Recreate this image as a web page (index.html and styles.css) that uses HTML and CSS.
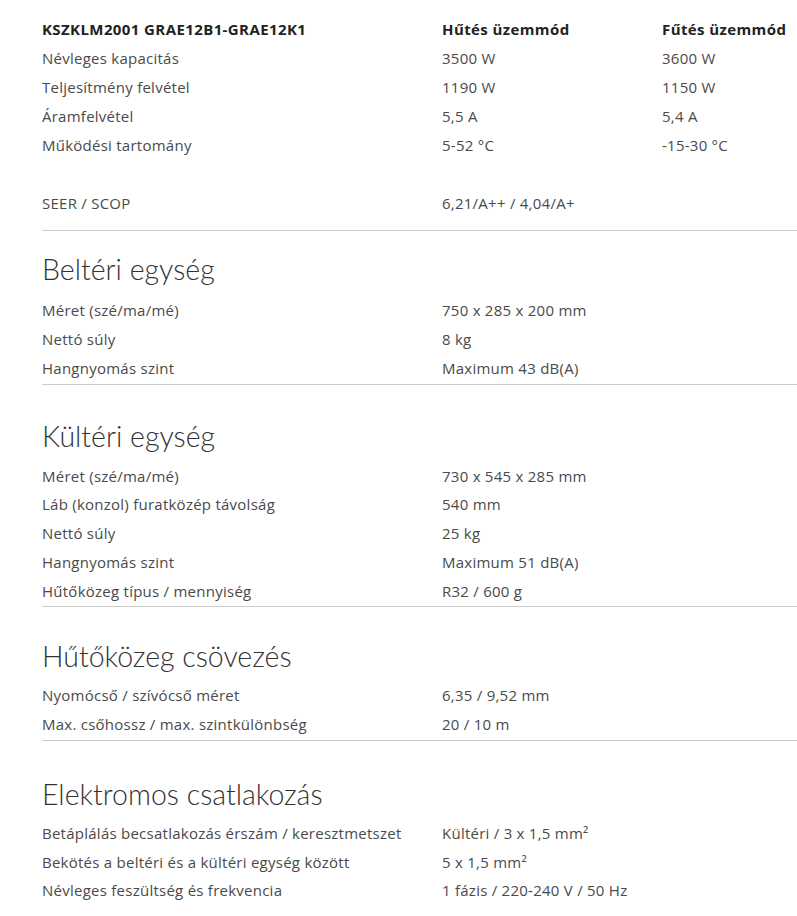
FILE: index.html
```html
<!DOCTYPE html>
<html lang="hu">
<head>
<meta charset="utf-8">
<title>Műszaki adatok</title>
<link rel="stylesheet" href="styles.css">
</head>
<body>
<div class="page">
  <section class="spec spec-main">
    <div class="row row-head">
      <span>KSZKLM2001 GRAE12B1-GRAE12K1</span>
      <span>Hűtés üzemmód</span>
      <span>Fűtés üzemmód</span>
    </div>
    <div class="row"><span>Névleges kapacitás</span><span>3500 W</span><span>3600 W</span></div>
    <div class="row"><span>Teljesítmény felvétel</span><span>1190 W</span><span>1150 W</span></div>
    <div class="row"><span>Áramfelvétel</span><span>5,5 A</span><span>5,4 A</span></div>
    <div class="row"><span>Működési tartomány</span><span>5-52 °C</span><span>-15-30 °C</span></div>
    <div class="row"><span></span><span></span><span></span></div>
    <div class="row"><span>SEER / SCOP</span><span>6,21/A++ / 4,04/A+</span><span></span></div>
  </section>

  <section class="spec spec-first">
    <h2 class="spec-title">Beltéri egység</h2>
    <div class="row"><span>Méret (szé/ma/mé)</span><span>750 x 285 x 200 mm</span></div>
    <div class="row"><span>Nettó súly</span><span>8 kg</span></div>
    <div class="row"><span>Hangnyomás szint</span><span>Maximum 43 dB(A)</span></div>
  </section>

  <section class="spec">
    <h2 class="spec-title">Kültéri egység</h2>
    <div class="row"><span>Méret (szé/ma/mé)</span><span>730 x 545 x 285 mm</span></div>
    <div class="row"><span>Láb (konzol) furatközép távolság</span><span>540 mm</span></div>
    <div class="row"><span>Nettó súly</span><span>25 kg</span></div>
    <div class="row"><span>Hangnyomás szint</span><span>Maximum 51 dB(A)</span></div>
    <div class="row"><span>Hűtőközeg típus / mennyiség</span><span>R32 / 600 g</span></div>
  </section>

  <section class="spec spec-pipes">
    <h2 class="spec-title">Hűtőközeg csövezés</h2>
    <div class="row"><span>Nyomócső / szívócső méret</span><span>6,35 / 9,52 mm</span></div>
    <div class="row"><span>Max. csőhossz / max. szintkülönbség</span><span>20 / 10 m</span></div>
  </section>

  <section class="spec spec-last">
    <h2 class="spec-title">Elektromos csatlakozás</h2>
    <div class="row"><span>Betáplálás becsatlakozás érszám / keresztmetszet</span><span>Kültéri / 3 x 1,5 mm²</span></div>
    <div class="row"><span>Bekötés a beltéri és a kültéri egység között</span><span>5 x 1,5 mm²</span></div>
    <div class="row"><span>Névleges feszültség és frekvencia</span><span>1 fázis / 220-240 V / 50 Hz</span></div>
  </section>
</div>
</body>
</html>
```

FILE: styles.css
```css
html, body {
  margin: 0;
  padding: 0;
  background: #ffffff;
}

body {
  font-family: "Open Sans", "Noto Sans", "DejaVu Sans", sans-serif;
  font-size: 15px;
  letter-spacing: 0.25px;
  color: #4a4a4a;
}

.page {
  padding-left: 42px;
}

.spec {
  border-bottom: 1px solid #cccccc;
  padding-bottom: 1px;
}

.spec-main {
  padding-top: 14px;
  padding-bottom: 13px;
}

.spec-last {
  border-bottom: none;
}

.row {
  display: grid;
  grid-template-columns: 400px 220px 1fr;
  height: 28.75px;
  align-items: center;
  white-space: nowrap;
}

.spec-main .row {
  height: 29px;
}

.row-head {
  font-weight: 700;
  letter-spacing: 0.4px;
  color: #222222;
}

.spec-title {
  margin: 33px 0 7px;
  font-family: "Lato", "Open Sans", sans-serif;
  font-size: 28.5px;
  line-height: 36px;
  font-weight: 300;
  letter-spacing: 0;
  color: #333333;
}

.spec-first {
  padding-bottom: 2px;
}

.spec-first .spec-title {
  margin-top: 20px;
  margin-bottom: 9px;
}

.spec-pipes .spec-title {
  margin-top: 31px;
}

.spec-last .spec-title {
  margin-top: 35px;
}
```
